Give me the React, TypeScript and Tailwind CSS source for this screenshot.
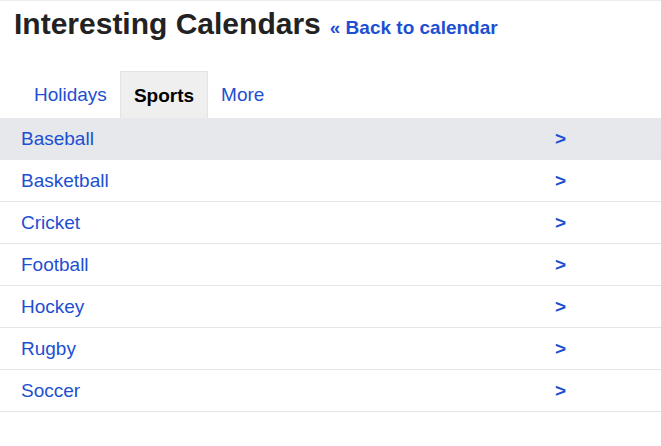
const sports = ['Baseball', 'Basketball', 'Cricket', 'Football', 'Hockey', 'Rugby', 'Soccer'];

const tabs = [
  { label: 'Holidays', active: false },
  { label: 'Sports', active: true },
  { label: 'More', active: false },
];

export default function App() {
  return (
    <div className="min-h-screen border-t border-[#ececec] bg-white font-['Liberation_Sans',Arial,sans-serif] text-[#222]">
      <header className="flex items-baseline gap-[9px] px-[14px] pt-[5px]">
        <h1 className="text-[30px] font-bold leading-[36px] text-[#222]">Interesting Calendars</h1>
        <a href="#" className="text-[19px] font-bold text-[#1d4fd2]">
          « Back to calendar
        </a>
      </header>

      <nav className="mt-[28px] flex pl-[21px]">
        {tabs.map((tab) => (
          <a
            key={tab.label}
            href="#"
            className={
              tab.active
                ? 'border border-b-0 border-[#e4e4e4] bg-[#efefef] px-[13px] pt-[12px] pb-[10px] text-[19px] font-bold leading-[24px] text-black'
                : 'px-[13px] pt-[13px] pb-[11px] text-[19px] leading-[22px] text-[#1d4fd2]'
            }
          >
            {tab.label}
          </a>
        ))}
      </nav>

      <ul>
        {sports.map((name, i) => (
          <li
            key={name}
            className={`grid h-[42px] grid-cols-[534px_auto] items-center border-b border-[#e6e6e6] pt-[2px] pl-[21px] text-[19px] ${
              i === 0 ? 'bg-[#e6e8ec]' : ''
            }`}
          >
            <a href="#" className="text-[#1d4fd2]">
              {name}
            </a>
            <span className="font-bold text-[#1d4fd2]">&gt;</span>
          </li>
        ))}
      </ul>
    </div>
  );
}
